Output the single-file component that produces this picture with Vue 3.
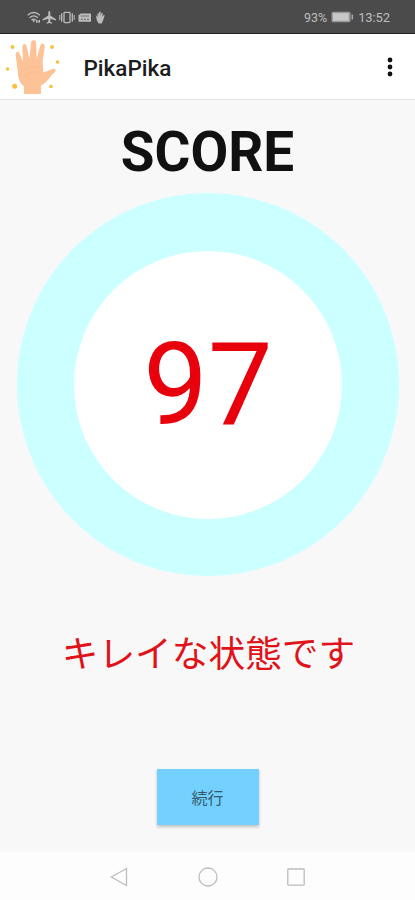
<script setup>
const score = 97
const sparkles = [
  [12.5, 14, 1.9], [52, 14, 1.9], [57.5, 29, 1.8],
  [7.5, 36, 1.7], [14.7, 53.2, 2.5], [51, 53.5, 1.8],
]
</script>

<template>
  <div class="screen">
    <header class="status">
      <svg class="status-icons" width="80" height="16" viewBox="0 0 80 16">
        <g fill="none" stroke="#bcbcbc" stroke-width="1.3">
          <path d="M.6 6.2Q6.7 .9 12.8 6.2M2.6 8.7Q6.7 5.2 10.8 8.7M4.5 11Q6.7 9.2 8.7 11" />
          <rect x="37" y="3.4" width="6" height="10.2" rx=".8" />
          <path d="M34.7 4.3v8.4M45.3 4.3v8.4" />
          <path d="M32.8 6v5M47.2 6v5" stroke-width="1" />
        </g>
        <g fill="#bcbcbc">
          <path d="M5.2 11.2h3l-1.5 2.2zM9 11h1.6v2.7H9zM11.4 11H13v2.7h-1.6z" />
          <path d="M22.3 2c.8 0 1 .8 1 1.6v3l5.7 3.6v1.4l-5.7-1.8v2.7l1.7 1.2v1l-2.7-.7-2.7.7v-1l1.7-1.2V9.8l-5.7 1.8v-1.4l5.7-3.6v-3c0-.8.2-1.6 1-1.6z" />
          <path d="M53.5 4.5h10.5v8.3H51.5V6.5z" />
          <path d="M69 6.2l1.5 2V4.5h1.4v3l.2-4.800h1.500l.1 4.800.7-3.800 1.300.2-.3 4 1.300-1.900 1 .6-1.500 4.300-1.500 3.600h-3l-1.800-3-1-4.700z" />
        </g>
        <path d="M53.5 7h8.5M54 10.3h2m1 0h2m1 0h2" stroke="#777" stroke-width="1.2" />
      </svg>
      <div class="status-right">
        <span class="battery-text">93%</span>
        <svg width="23" height="12" viewBox="0 0 23 12">
          <rect x=".5" y=".8" width="19" height="10.4" rx="1.5" fill="#999" />
          <rect x="2" y="2.2" width="15.7" height="7.6" fill="#c8c8c8" />
          <path d="M20.5 3.500h1.500v5h-1.500z" fill="#aaa" />
        </svg>
        <span class="clock">13:52</span>
      </div>
    </header>

    <div class="appbar">
      <svg class="logo" width="64" height="64" viewBox="0 2 64 64">
        <path fill="#fdc397" d="M24 61V53.5C19.5 50 18 45 17.8 39L15.7 22.5C15.4 18 19 17.5 20 21.5L23 29 22.3 14.5C22.3 10 26.2 9.8 26.8 14L29.5 26 31 10C31.3 6 36 6 36.2 10L36.7 26 40.3 12.5C41.2 9.2 45.3 10 44.8 14L42.6 28 43.3 39.5 53 35.8C56.5 35.2 56.3 38 54.5 39.5 49.5 43.5 47.5 49.5 41 52.5V61Z" />
        <path d="M24 36.5q7-3.5 16-2.5M25 42q7-4 13-3" fill="none" stroke="#f8ba8c" stroke-width=".8" />
        <circle v-for="(s, i) in sparkles" :key="i" :cx="s[0]" :cy="s[1]" :r="s[2]" fill="#f8c13a" />
      </svg>
      <h1 class="title">PikaPika</h1>
      <svg class="more" width="8" height="20" viewBox="0 0 8 20" fill="#111">
        <circle cx="4" cy="3" r="2.4" /><circle cx="4" cy="10" r="2.4" /><circle cx="4" cy="17" r="2.4" />
      </svg>
    </div>

    <main class="content">
      <h2 class="heading">SCORE</h2>
      <div class="ring"><div class="disc">{{ score }}</div></div>
      <p class="message">キレイな状態です</p>
      <button class="continue">続行</button>
    </main>

    <nav class="nav">
      <svg width="20" height="22" viewBox="0 0 20 22"><path d="M1.3 11L16.5 2.5v17z" /></svg>
      <svg width="20" height="22" viewBox="0 0 20 22"><circle cx="10" cy="11" r="9" /></svg>
      <svg width="20" height="22" viewBox="0 0 20 22"><rect x="1.8" y="3" width="16.4" height="16.2" rx=".8" /></svg>
    </nav>
  </div>
</template>

<style>
body { background: #f8f8f8; }
</style>

<style scoped>
.screen {
  width: 415px;
  height: 900px;
  display: flex;
  flex-direction: column;
  overflow: hidden;
  background: #f8f8f8;
  font-family: Roboto, "Noto Sans CJK JP", sans-serif;
}
.status {
  box-sizing: border-box;
  height: 34px;
  flex: none;
  padding: 1px 25px 0 27px;
  display: flex;
  align-items: center;
  justify-content: space-between;
  background: #4b4b4b;
  border-bottom: 1px solid #222;
  color: #bdbdbd;
  font-size: 13px;
}
.status-right { display: flex; align-items: center; gap: 4px; }
.battery-text { font-size: 12.5px; }
.clock { letter-spacing: -.1px; }
.appbar {
  box-sizing: border-box;
  height: 66px;
  flex: none;
  display: flex;
  align-items: center;
  padding-right: 21px;
  background: #fff;
  border-bottom: 1px solid #e6e6e6;
}
.title {
  margin: 2px 0 0 19.5px;
  font-size: 22.5px;
  font-weight: 500;
  color: #1c1c1c;
}
.more { margin-left: auto; margin-top: 1px; }
.content {
  height: 752px;
  flex: none;
  display: flex;
  flex-direction: column;
  align-items: center;
}
.heading {
  margin: 20px 0 0;
  height: 64px;
  line-height: 64px;
  font-size: 54.8px;
  font-weight: 700;
  color: #111;
}
.ring {
  width: 382px;
  height: 383px;
  margin: 9px 0 0 1px;
  flex: none;
  display: grid;
  place-items: center;
  border-radius: 50%;
  background: #ccffff;
}
.disc {
  width: 268px;
  height: 268px;
  border-radius: 50%;
  background: #fff;
  color: #e8000d;
  font-size: 115px;
  line-height: 268px;
  text-align: center;
}
.message {
  margin: 52px 0 0 2px;
  height: 54px;
  line-height: 54px;
  font-size: 36.7px;
  color: #e0121a;
  white-space: nowrap;
}
.continue {
  width: 102px;
  height: 56px;
  margin-top: 87px;
  padding: 0;
  border: 0;
  background: #74d1ff;
  box-shadow: 0 2px 3px rgba(0, 0, 0, .22);
  color: #35596c;
  font: 16px Roboto, "Noto Sans CJK JP", sans-serif;
}
.nav {
  flex: 1;
  display: flex;
  justify-content: center;
  align-items: center;
  gap: 68px;
  padding-top: 2px;
  background: #fdfdfd;
}
.nav svg { fill: none; stroke: #bcbcbc; stroke-width: 1.3; }
</style>
